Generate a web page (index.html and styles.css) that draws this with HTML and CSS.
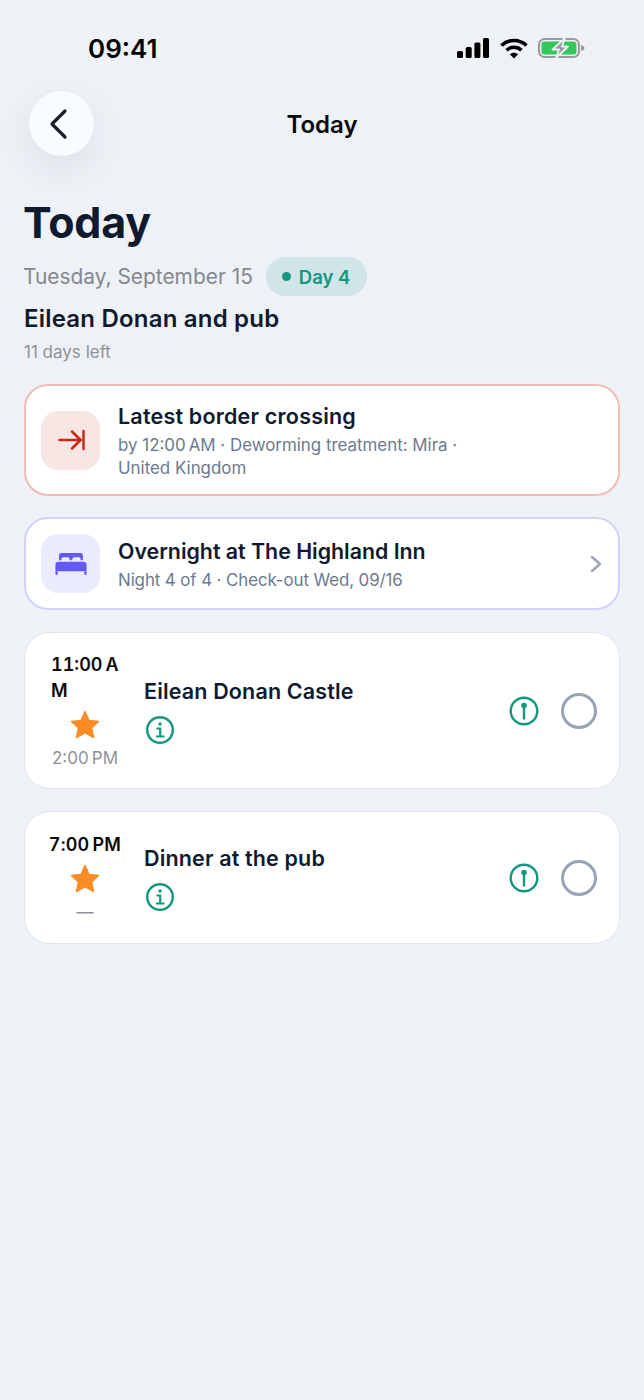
FILE: index.html
```html
<!DOCTYPE html>
<html lang="en">
  <head>
    <meta charset="UTF-8" />
    <meta name="viewport" content="width=device-width, initial-scale=1.0" />
    <title>Today</title>
    <link rel="stylesheet" href="styles.css">
  </head>
  <body>
    <div class="status-bar">
      <span class="clock">09:41</span>
      <div class="status-icons">
        <svg class="signal" width="32" height="20" viewBox="0 0 32 20"><rect x="0" y="13" width="6" height="7" rx="1.500" fill="#000"/><rect x="8.700" y="9" width="6" height="11" rx="1.500" fill="#000"/><rect x="17.400" y="4.500" width="6" height="15.500" rx="1.500" fill="#000"/><rect x="26" y="0" width="6" height="20" rx="1.500" fill="#000"/></svg>
        <svg class="wifi" width="28" height="21" viewBox="0 0 28 21" fill="none" stroke="#000" stroke-width="3.600"><path d="M1.500 7.500C8.500 .8 19.500 .8 26.500 7.500"/><path d="M6.500 12.300C10.800 8.300 17.200 8.300 21.500 12.300"/><path d="M14 20.500 9.800 16.300C12.200 14.200 15.800 14.200 18.200 16.300Z" fill="#000" stroke="none"/></svg>
        <svg class="battery" width="47" height="22" viewBox="0 0 47 22"><rect x="1" y="2" width="40" height="18" rx="5.500" fill="none" stroke="#9a9a9a" stroke-width="2"/><rect x="3.500" y="4.500" width="35" height="13" rx="3" fill="#34c759"/><path d="M43 8c2 .5 3.500 1.500 3.500 3s-1.500 2.500-3.500 3z" fill="#9a9a9a"/><path d="M27 1 14.500 12.500h6.500L18 21 30 9.500H24z" fill="#9a9a9a" stroke="#eef1f6" stroke-width="1.800" stroke-linejoin="round"/></svg>
      </div>
    </div>

    <header class="nav">
      <button class="back-btn">
        <svg width="22" height="32" viewBox="0 0 22 32" fill="none" stroke="#1b1f2a" stroke-width="3.200" stroke-linecap="round" stroke-linejoin="round"><path d="M17 3 4 16l13 13"/></svg>
      </button>
      <span class="nav-title">Today</span>
    </header>

    <main class="content">
      <h1>Today</h1>
      <div class="date-row">
        <span class="date">Tuesday, September 15</span>
        <span class="day-pill"><i class="dot"></i>Day 4</span>
      </div>
      <h2>Eilean Donan and pub</h2>
      <p class="days-left">11 days left</p>

      <section class="notice notice-red">
        <div class="notice-icon icon-red">
          <svg width="28" height="22" viewBox="0 0 28 22" fill="none" stroke="#c9281e" stroke-width="2.500" stroke-linecap="round" stroke-linejoin="round"><path d="M2.500 11h21"/><path d="M15 2.500 23.500 11 15 19.500"/><path d="M26.500 2v18"/></svg>
        </div>
        <div class="notice-text">
          <div class="notice-title">Latest border crossing</div>
          <div class="notice-sub">by 12:00&#8239;AM · Deworming treatment: Mira ·<br>United Kingdom</div>
        </div>
      </section>

      <section class="notice notice-purple">
        <div class="notice-icon icon-purple">
          <svg width="32" height="22" viewBox="0 0 34 24" fill="#6359f5"><path d="M4 2.500A2.500 2.500 0 0 1 6.500 0h21A2.500 2.500 0 0 1 30 2.500V8h-2.500V6.500a2 2 0 0 0-2-2h-5a2 2 0 0 0-2 2V8h-3V6.500a2 2 0 0 0-2-2h-5a2 2 0 0 0-2 2V8H4z"/><path d="M3.500 9.500h27A3.500 3.500 0 0 1 34 13v7H0v-7a3.500 3.500 0 0 1 3.500-3.500z"/><rect x="0" y="20" width="2.500" height="4" rx="1"/><rect x="31.500" y="20" width="2.500" height="4" rx="1"/></svg>
        </div>
        <div class="notice-text">
          <div class="notice-title">Overnight at The Highland Inn</div>
          <div class="notice-sub">Night 4 of 4 · Check-out Wed, 09/16</div>
        </div>
        <svg class="chevron" width="12" height="18" viewBox="0 0 12 18" fill="none" stroke="#9aa5b4" stroke-width="2.400" stroke-linecap="round" stroke-linejoin="round"><path d="M2 2l8 7-8 7"/></svg>
      </section>

      <section class="stop stop-castle">
        <div class="stop-time">
          <div class="start">11:00&#8239;A<br>M</div>
          <svg class="star" width="30" height="29" viewBox="0 0 30 29"><path d="M15 1.500l4 9 9.500 1-7 6.500 2 9.500-8.500-5-8.500 5 2-9.500-7-6.500 9.500-1z" fill="#fb8b24" stroke="#fb8b24" stroke-width="1.500" stroke-linejoin="round"/></svg>
          <div class="end">2:00&#8239;PM</div>
        </div>
        <div class="stop-main">
          <div class="stop-title">Eilean Donan Castle</div>
          <svg class="info" width="30" height="30" viewBox="0 0 30 30" fill="none" stroke="#14967f" stroke-width="2.400"><circle cx="15" cy="15" r="12.800"/><circle cx="15" cy="9" r="1.700" fill="#14967f" stroke="none"/><path d="M11.500 13.500H15.200V21M11 21.500h8.500" stroke-width="2.200"/></svg>
        </div>
        <svg class="pin" width="30" height="30" viewBox="0 0 30 30" fill="none" stroke="#14967f" stroke-width="2.400"><circle cx="15" cy="15" r="13.300"/><circle cx="15" cy="9.500" r="2.800" fill="#14967f" stroke="none"/><path d="M15 10v12.500" stroke-linecap="round"/></svg>
        <span class="check"></span>
      </section>

      <section class="stop stop-dinner">
        <div class="stop-time">
          <div class="start">7:00&#8239;PM</div>
          <svg class="star" width="30" height="29" viewBox="0 0 30 29"><path d="M15 1.500l4 9 9.500 1-7 6.500 2 9.500-8.500-5-8.500 5 2-9.500-7-6.500 9.500-1z" fill="#fb8b24" stroke="#fb8b24" stroke-width="1.500" stroke-linejoin="round"/></svg>
          <div class="end">—</div>
        </div>
        <div class="stop-main">
          <div class="stop-title">Dinner at the pub</div>
          <svg class="info" width="30" height="30" viewBox="0 0 30 30" fill="none" stroke="#14967f" stroke-width="2.400"><circle cx="15" cy="15" r="12.800"/><circle cx="15" cy="9" r="1.700" fill="#14967f" stroke="none"/><path d="M11.500 13.500H15.200V21M11 21.500h8.500" stroke-width="2.200"/></svg>
        </div>
        <svg class="pin" width="30" height="30" viewBox="0 0 30 30" fill="none" stroke="#14967f" stroke-width="2.400"><circle cx="15" cy="15" r="13.300"/><circle cx="15" cy="9.500" r="2.800" fill="#14967f" stroke="none"/><path d="M15 10v12.500" stroke-linecap="round"/></svg>
        <span class="check"></span>
      </section>
    </main>
  </body>
</html>
```

FILE: styles.css
```css
* {
  box-sizing: border-box;
}

body {
  margin: 0;
  min-height: 1400px;
  background-color: #eef1f6;
  font-family: Inter, "Noto Sans", sans-serif;
  color: #0f1a2e;
}

.status-bar {
  display: flex;
  justify-content: space-between;
  align-items: center;
  height: 96px;
  padding: 0 59px 0 88px;
}

.clock {
  font-size: 26px;
  font-weight: 600;
  color: #000;
}

.status-icons {
  display: flex;
  align-items: center;
}

.wifi {
  margin: 0 10px 0 11px;
}

.nav {
  position: relative;
  display: flex;
  justify-content: center;
  align-items: center;
  height: 65px;
  margin-bottom: 35px;
}

.back-btn {
  position: absolute;
  left: 29px;
  top: -5px;
  width: 65px;
  height: 65px;
  display: flex;
  align-items: center;
  justify-content: center;
  padding: 0 5px 0 0;
  border: none;
  border-radius: 50%;
  background-color: #f8fbff;
  box-shadow: 0 12px 36px rgba(30, 40, 60, 0.08);
}

.nav-title {
  font-size: 24px;
  font-weight: 600;
  color: #0a0a0a;
  margin-top: -8px;
}

.content {
  padding: 0 24px;
}

h1 {
  margin: 0 0 0 -1px;
  font-size: 43px;
  line-height: 52px;
  font-weight: 700;
  letter-spacing: -0.2px;
}

.date-row {
  display: flex;
  align-items: center;
  gap: 13px;
  margin-top: 9px;
}

.date {
  font-size: 20.900px;
  color: #85888f;
  margin-left: -1px;
}

.day-pill {
  display: flex;
  align-items: center;
  gap: 8px;
  height: 39px;
  padding: 0 17px 0 16px;
  border-radius: 20px;
  background-color: #d0e5e7;
  color: #14967f;
  font-size: 18.500px;
  font-weight: 600;
}

.dot {
  width: 9px;
  height: 9px;
  border-radius: 50%;
  background-color: #14967f;
}

h2 {
  margin: 7px 0 0;
  font-size: 24px;
  line-height: 32px;
  font-weight: 600;
  letter-spacing: 0.2px;
}

.days-left {
  margin: 5px 0 0;
  font-size: 17px;
  line-height: 24px;
  color: #8f9297;
}

.notice {
  display: flex;
  align-items: center;
  gap: 18px;
  margin-top: 21px;
  padding: 0 16px 0 15px;
  border-radius: 24px;
  background-color: #fff;
  border: 2px solid;
}

.notice-red {
  height: 112px;
  margin-top: 20px;
  border-color: #f0bcb5;
}

.notice-purple {
  height: 93px;
  border-color: #d2d2fc;
}

.notice-icon {
  flex: none;
  width: 59px;
  height: 59px;
  border-radius: 17px;
  display: flex;
  align-items: center;
  justify-content: center;
}

.icon-red {
  background-color: #f8e6e4;
}

.icon-purple {
  background-color: #ebebfe;
}

.notice-text {
  flex: 1;
  padding-top: 2px;
}

.notice-title {
  font-size: 21.500px;
  line-height: 29px;
  font-weight: 600;
  letter-spacing: 0.2px;
}

.notice-sub {
  margin-top: 3px;
  font-size: 16.900px;
  line-height: 23px;
  color: #6c7a90;
}

.notice-purple .notice-title {
  font-size: 21.350px;
  letter-spacing: 0;
}

.notice-purple .notice-sub {
  letter-spacing: -0.1px;
}

.chevron {
  flex: none;
}

.stop {
  display: flex;
  align-items: center;
  margin-top: 22px;
  padding: 0 22px 0 16px;
  border-radius: 26px;
  background-color: #fff;
  border: 1px solid #e2e6ee;
}

.stop-castle {
  height: 157px;
}

.stop-dinner {
  height: 133px;
}

.stop-time {
  flex: none;
  width: 88px;
  display: flex;
  flex-direction: column;
  align-items: center;
  padding-top: 1px;
}

.start {
  width: 68px;
  white-space: nowrap;
  font-size: 18px;
  line-height: 26px;
  font-weight: 600;
  color: #0a0a0a;
  font-variant-numeric: tabular-nums;
}

.stop-dinner .start {
  width: auto;
  letter-spacing: 0.2px;
}

.star {
  margin-top: 6px;
}

.end {
  margin-top: 7px;
  font-size: 17px;
  line-height: 24px;
  color: #8f9297;
}

.stop-main {
  flex: 1;
  padding-left: 15px;
}

.stop-title {
  font-size: 21.500px;
  line-height: 30px;
  font-weight: 600;
  letter-spacing: 0.15px;
}

.info {
  display: block;
  margin-top: 9px;
  margin-left: 1px;
}

.pin {
  flex: none;
  margin-top: 1px;
}

.check {
  flex: none;
  width: 36px;
  height: 36px;
  margin-left: 22px;
  border-radius: 50%;
  border: 3px solid #97a4b8;
}
```
